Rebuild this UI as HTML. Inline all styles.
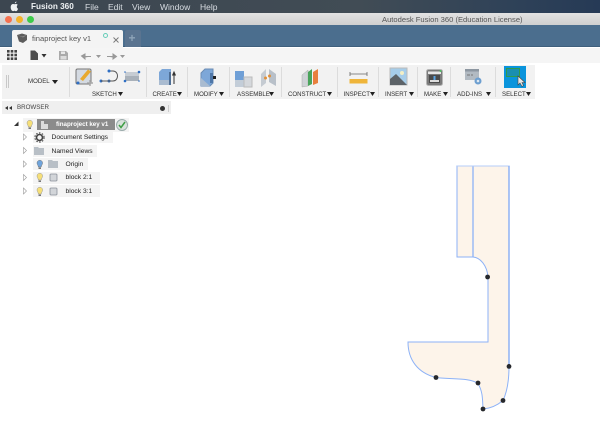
<!DOCTYPE html>
<html><head><meta charset="utf-8">
<style>
html,body{margin:0;padding:0;background:#fff}
#p{position:relative;width:600px;height:433px;overflow:hidden;background:#fff;font-family:"Liberation Sans",sans-serif;filter:blur(.3px)}
#p div{position:absolute}
.t{white-space:nowrap;line-height:10px}
.m{font-size:8.5px;color:#d8dde2;top:2px;line-height:10px;white-space:nowrap}
.l{font-size:6.1px;color:#2e2e2e;top:90px;line-height:9px;white-space:nowrap}
.sep{top:67px;width:1px;height:30px;background:#dcdcdc}
.row{height:12px;background:#f4f4f4}
.n{font-size:6.7px;color:#222;line-height:10px;white-space:nowrap}
svg{position:absolute;overflow:visible}
</style></head><body><div id="p">
<div style="left:0;top:0;width:600px;height:13px;background:linear-gradient(90deg,#3c4650 0%,#414c55 60%,#2f4258 85%,#263a56 100%)"></div>
<svg style="left:0;top:0" width="30" height="13"><path d="M16.6 1.6c-.2 1-1 1.700-1.800 1.700 0-1 .8-1.700 1.800-1.700zM12.500 11c-1.500-.6-2.500-4-1.200-6 .9-1.200 2.200-1.200 3.300-.7 1-.5 2.300-.5 3.200.6-1.500 1-1.200 3.200.3 3.900-.5 1.300-1.200 2.400-2.100 2.400-.6 0-1-.4-1.500-.4-.6 0-1.200.7-2 .2z" fill="#eef1f3"/></svg>
<div class="m" style="left:31px;font-weight:bold;color:#eef1f3;font-size:8.2px">Fusion 360</div>
<div class="m" style="left:85px">File</div>
<div class="m" style="left:108px">Edit</div>
<div class="m" style="left:132px">View</div>
<div class="m" style="left:160px">Window</div>
<div class="m" style="left:200px">Help</div>

<div style="left:0;top:13px;width:600px;height:12px;background:linear-gradient(#e2e2e2,#cfcfcf)"></div>
<div style="left:5px;top:16px;width:7px;height:7px;border-radius:50%;background:#f5714f"></div>
<div style="left:16px;top:16px;width:7px;height:7px;border-radius:50%;background:#f4b32a"></div>
<div style="left:27px;top:16px;width:7px;height:7px;border-radius:50%;background:#3ccb4a"></div>
<div class="t" style="left:382px;top:15px;font-size:7.6px;color:#555">Autodesk Fusion 360 (Education License)</div>

<div style="left:0;top:25px;width:600px;height:22px;background:#4b6e8e;border-bottom:1px solid #3f5f7c;box-sizing:border-box"></div>
<div style="left:12px;top:30px;width:111px;height:18px;background:#f4f4f4;border-radius:2px 2px 0 0"></div>
<div style="left:125px;top:30px;width:16px;height:17px;background:#5a7490;border-radius:2px 2px 0 0"></div>
<div class="t" style="left:128.500px;top:33px;font-size:12px;color:#8ea4b8;font-weight:bold">+</div>
<svg style="left:17px;top:33px" width="14" height="12"><path d="M0 2L5 0.500L10 2V7L6 10L2 8.500Z" fill="#5c5c5c"/><path d="M0 2L5 3.500L10 2L6 4.500Z" fill="#8a8a8a"/></svg>
<div class="t" style="left:32px;top:34px;font-size:7.6px;color:#555">finaproject key v1</div>
<div style="left:103px;top:33px;width:3px;height:3px;border:1px solid #66cdb8;border-radius:50%"></div>
<svg style="left:113px;top:37px" width="6" height="6"><path d="M.5 .5L5.500 5.500M5.500 .5L.5 5.500" stroke="#777" stroke-width=".9"/></svg>

<div style="left:0;top:48px;width:600px;height:15px;background:#f5f5f5"></div>
<svg style="left:6px;top:49px" width="12" height="12"><g fill="#444"><rect x="1" y="1" width="2.600" height="2.600"/><rect x="4.700" y="1" width="2.600" height="2.600"/><rect x="8.400" y="1" width="2.600" height="2.600"/><rect x="1" y="4.700" width="2.600" height="2.600"/><rect x="4.700" y="4.700" width="2.600" height="2.600"/><rect x="8.400" y="4.700" width="2.600" height="2.600"/><rect x="1" y="8.400" width="2.600" height="2.600"/><rect x="4.700" y="8.400" width="2.600" height="2.600"/><rect x="8.400" y="8.400" width="2.600" height="2.600"/></g></svg>
<svg style="left:30px;top:50px" width="18" height="11"><path d="M.5 .5H5L8 3.500V10H.5Z" fill="#4d4d4d"/><path d="M11.500 4H16.500L14 7.500Z" fill="#333"/></svg>
<svg style="left:58px;top:50px" width="11" height="11"><path d="M1 1H8L10 3V10H1Z" fill="#aaa"/><rect x="3" y="1.500" width="4" height="2.500" fill="#e8e8e8"/><rect x="2.500" y="6" width="6" height="3.500" fill="#dcdcdc"/></svg>
<svg style="left:81px;top:50px" width="45" height="11"><path d="M10 6.500H4V4L.5 6L4 9V7.500M4 6.500H9.500" fill="#999" stroke="#999"/><path d="M15 5H20L17.500 8Z" fill="#999"/><path d="M26 6.500H32V4L35.500 6.500L32 9V7.500" fill="#999" stroke="#999"/><path d="M39 5H44L41.500 8Z" fill="#999"/></svg>

<div style="left:2px;top:65px;width:533px;height:34px;background:#f2f2f2"></div>
<div style="left:6px;top:75px;width:1px;height:13px;background:#c8c8c8"></div>
<div style="left:8px;top:75px;width:1px;height:13px;background:#c8c8c8"></div>
<div class="t" style="left:28px;top:77px;font-size:6.100px;color:#333">MODEL</div>
<svg style="left:52px;top:80px" width="6" height="5"><path d="M0 0H6L3 4Z" fill="#222"/></svg>
<div class="sep" style="left:69px"></div><div class="sep" style="left:146px"></div><div class="sep" style="left:187px"></div><div class="sep" style="left:229px"></div><div class="sep" style="left:281px"></div><div class="sep" style="left:337px"></div><div class="sep" style="left:378px"></div><div class="sep" style="left:417px"></div><div class="sep" style="left:450px"></div><div class="sep" style="left:495px"></div>

<svg style="left:75px;top:68px" width="70" height="20">
<rect x="1" y="1" width="15" height="15" rx="1.500" fill="#d4dae2" stroke="#777"/>
<path d="M5 11L13 1.500L16 3.500L8 13Z" fill="#e8a92e"/>
<circle cx="3" cy="15" r="1.500" fill="#2f6fc4"/><path d="M15 12V18M12 15H18" stroke="#aaa" stroke-width="1.500"/>
<circle cx="26" cy="13" r="1.500" fill="#2f6fc4"/><circle cx="34" cy="13" r="1.500" fill="#2f6fc4"/><path d="M26 13H34" stroke="#555"/>
<path d="M34 3H38C44 3 44 13 38 13H34" fill="none" stroke="#555"/><circle cx="34" cy="3" r="1.500" fill="#2f6fc4"/>
<path d="M50 4H64V13H50Z" fill="#c6ccd3"/><path d="M50 8H64V13H50Z" fill="#a9b1ba"/>
<circle cx="50" cy="13" r="1.300" fill="#2f6fc4"/><circle cx="64" cy="4" r="1.300" fill="#2f6fc4"/><circle cx="50" cy="4" r="0.800" fill="#2f6fc4"/><circle cx="64" cy="13" r="0.800" fill="#2f6fc4"/>
</svg>
<svg style="left:158px;top:68px" width="20" height="20"><path d="M1 4L4 1H13V15L11 17H1Z" fill="#7da7d8"/><path d="M1 12H11V17H1Z" fill="#a9bbd0"/><path d="M11 4H13V17H11Z" fill="#4f6f96"/><path d="M16 6V16M14.500 7.500L16 4L17.500 7.500" stroke="#333" fill="#333"/></svg>
<svg style="left:199px;top:68px" width="20" height="20"><path d="M2 5L6 1H14V15L11 18H2Z" fill="#7da7d8" stroke="#6a8cb5"/><path d="M2 10V18H11" fill="#a9bbd0"/><path d="M12 8H17V11H12Z" fill="#222"/><path d="M11 5H14V15H11Z" fill="#4f77a8"/></svg>
<svg style="left:234px;top:68px" width="44" height="20"><path d="M1 3H10V12H1Z" fill="#6f9fd6"/><path d="M1 12H10V19H1Z" fill="#c3cdd8"/><path d="M10 9H18V19H10Z" fill="#d5d8dc" stroke="#bbb"/><path d="M27 6L32 1V15L27 19Z" fill="#c5cbd2"/><path d="M35 1L42 6V18L35 14Z" fill="#b8c0c9"/><circle cx="31.500" cy="10" r="1.500" fill="#e0903a"/><circle cx="35.500" cy="8" r="1.500" fill="#e0903a"/></svg>
<svg style="left:300px;top:68px" width="20" height="20"><path d="M2 7L8 2V18L2 19Z" fill="#cfd3d7" stroke="#aaa" stroke-width=".5"/><path d="M8 4L12 1V16L8 18Z" fill="#4aa45c"/><path d="M13 4L18 1V15L13 17Z" fill="#e8803e"/></svg>
<svg style="left:349px;top:70px" width="20" height="16"><path d="M1 2V6M18 2V6M1 4H18" stroke="#666" stroke-width=".8"/><rect x="0.500" y="9" width="18" height="4.500" fill="#efb53a"/></svg>
<svg style="left:390px;top:68px" width="18" height="18"><rect x="0" y="0" width="17" height="17" fill="#a6cdea" stroke="#bbb"/><circle cx="12" cy="5" r="2" fill="#f3efc6"/><path d="M0 17V11L6 6L13 13L17 17Z" fill="#5d6368"/></svg>
<svg style="left:426px;top:69px" width="17" height="17"><rect x=".5" y=".5" width="16" height="16" rx="2" fill="#7a7a7a" stroke="#b5b5b5"/><rect x="2" y="2.500" width="13" height="2.500" fill="#e6e6e6"/><rect x="3" y="6" width="11" height="8" fill="#4a4a4a"/><path d="M4 11H13V13H4Z" fill="#dcdcdc"/><path d="M8.500 7V11" stroke="#5aa5e6" stroke-width="2"/><circle cx="14.500" cy="2" r="1" fill="#4ac060"/></svg>
<svg style="left:465px;top:69px" width="18" height="17"><rect x="0" y="0" width="14" height="11" fill="#b2bac2"/><rect x="0" y="0" width="14" height="2.500" fill="#8d97a1"/><path d="M2 6H5M6 6H8" stroke="#777"/><circle cx="13" cy="12" r="3.500" fill="#6d9fd0"/><circle cx="13" cy="12" r="1.300" fill="#dfe8f0"/></svg>
<div style="left:504px;top:66px;width:22px;height:22px;background:#0a94dc"></div>
<div style="left:506px;top:68px;width:12px;height:7px;border:1px solid #2f9a4e;background:#1a8fb0"></div>
<svg style="left:517px;top:75px" width="9" height="12"><path d="M1 1V10L3 8L5 11.500L6.500 10.500L5 7.500H8Z" fill="#e6e6e6" stroke="#444" stroke-width=".6"/></svg>

<div class="l" style="left:92px">SKETCH</div><svg style="left:118px;top:92px" width="5" height="4"><path d="M0 0H5L2.500 4Z" fill="#222"/></svg>
<div class="l" style="left:152.500px">CREATE</div><svg style="left:177px;top:92px" width="5" height="4"><path d="M0 0H5L2.500 4Z" fill="#222"/></svg>
<div class="l" style="left:194px">MODIFY</div><svg style="left:219px;top:92px" width="5" height="4"><path d="M0 0H5L2.500 4Z" fill="#222"/></svg>
<div class="l" style="left:237px">ASSEMBLE</div><svg style="left:269px;top:92px" width="5" height="4"><path d="M0 0H5L2.500 4Z" fill="#222"/></svg>
<div class="l" style="left:288px">CONSTRUCT</div><svg style="left:327px;top:92px" width="5" height="4"><path d="M0 0H5L2.500 4Z" fill="#222"/></svg>
<div class="l" style="left:343.500px">INSPECT</div><svg style="left:370px;top:92px" width="5" height="4"><path d="M0 0H5L2.500 4Z" fill="#222"/></svg>
<div class="l" style="left:385px">INSERT</div><svg style="left:409px;top:92px" width="5" height="4"><path d="M0 0H5L2.500 4Z" fill="#222"/></svg>
<div class="l" style="left:424px">MAKE</div><svg style="left:443px;top:92px" width="5" height="4"><path d="M0 0H5L2.500 4Z" fill="#222"/></svg>
<div class="l" style="left:457px">ADD-INS</div><svg style="left:486px;top:92px" width="5" height="4"><path d="M0 0H5L2.500 4Z" fill="#222"/></svg>
<div class="l" style="left:502px">SELECT</div><svg style="left:526px;top:92px" width="5" height="4"><path d="M0 0H5L2.500 4Z" fill="#222"/></svg>

<div style="left:2px;top:101px;width:169px;height:13px;background:#efefef"></div>
<svg style="left:5px;top:106px" width="7" height="4"><path d="M3 0V4L0 2ZM7 0V4L4 2Z" fill="#333"/></svg>
<div class="t" style="left:17px;top:103px;font-size:6.200px;color:#444">BROWSER</div>
<div style="left:160px;top:106px;width:5px;height:5px;border-radius:50%;background:#333"></div>
<div style="left:168px;top:105px;width:1px;height:7px;background:#ccc"></div>

<svg style="left:14px;top:121px" width="5" height="6"><path d="M4.500 .5V5H0Z" fill="#333"/></svg>
<div class="row" style="left:23px;top:118px;width:106px;height:14px"></div>
<div style="left:37px;top:119px;width:78px;height:11px;background:#8b8b8b"></div>
<div class="n" style="left:56px;top:120px;color:#fff;font-weight:bold;font-size:6.200px">finaproject key v1</div>
<svg style="left:40px;top:120px" width="10" height="10"><path d="M1 1H4V4H8V9H1Z" fill="#dcdcdc"/></svg>
<div style="left:116px;top:119px;width:10px;height:10px;border-radius:50%;background:#d9e2dc;border:1px solid #9aa"></div>
<svg style="left:117px;top:120px" width="10" height="10"><path d="M2 5L4 7.500L8 2" fill="none" stroke="#3f9e46" stroke-width="1.500"/></svg>

<div class="row" style="left:33px;top:131px;width:80px;height:12px"></div>
<div class="row" style="left:33px;top:145px;width:64px;height:12px"></div>
<div class="row" style="left:33px;top:158px;width:55px;height:12px"></div>
<div class="row" style="left:33px;top:172px;width:67px;height:12px"></div>
<div class="row" style="left:33px;top:185px;width:67px;height:12px"></div>

<svg style="left:23px;top:120px" width="12" height="80"><g fill="#fff" stroke="#999" stroke-width=".6"><path d="M0.500 14V20L3.500 17Z"/><path d="M0.500 27.500V33.500L3.500 30.500Z"/><path d="M0.500 41V47L3.500 44Z"/><path d="M0.500 54.500V60.500L3.500 57.500Z"/><path d="M0.500 68V74L3.500 71Z"/></g></svg>
<svg style="left:25px;top:119px" width="10" height="80"><g><path d="M2 4a2.800 2.800 0 1 1 5.600 0c0 1.500-1.200 2-1.300 4H3.300c-.1-2-1.300-2.500-1.300-4z" fill="#f6df78" stroke="#999" stroke-width=".5"/><rect x="3.500" y="8.500" width="2.500" height="1.500" fill="#777"/></g>
<g transform="translate(10,40)"><path d="M2 4a2.800 2.800 0 1 1 5.600 0c0 1.500-1.200 2-1.300 4H3.300c-.1-2-1.300-2.500-1.300-4z" fill="#6fa4dc" stroke="#777" stroke-width=".5"/><rect x="3.500" y="8.500" width="2.500" height="1.500" fill="#777"/></g>
<g transform="translate(10,53)"><path d="M2 4a2.800 2.800 0 1 1 5.600 0c0 1.500-1.200 2-1.300 4H3.300c-.1-2-1.300-2.500-1.300-4z" fill="#f6df78" stroke="#999" stroke-width=".5"/><rect x="3.500" y="8.500" width="2.500" height="1.500" fill="#777"/></g>
<g transform="translate(10,67)"><path d="M2 4a2.800 2.800 0 1 1 5.600 0c0 1.500-1.200 2-1.300 4H3.300c-.1-2-1.300-2.500-1.300-4z" fill="#f6df78" stroke="#999" stroke-width=".5"/><rect x="3.500" y="8.500" width="2.500" height="1.500" fill="#777"/></g></svg>

<svg style="left:34px;top:132px" width="11" height="11"><circle cx="5.500" cy="5.500" r="3" fill="none" stroke="#444" stroke-width="1.600"/><circle cx="5.500" cy="5.500" r="4.600" fill="none" stroke="#444" stroke-width="1.100" stroke-dasharray="1.500 1.500"/></svg>
<svg style="left:34px;top:146px" width="11" height="10"><path d="M0 1H4L5 2H10V9H0Z" fill="#b8bfc6"/></svg>
<svg style="left:48px;top:159px" width="11" height="10"><path d="M0 1H4L5 2H10V9H0Z" fill="#b8bfc6"/></svg>
<svg style="left:49px;top:173px" width="9" height="9"><rect x="1" y="1" width="7" height="7" rx="1" fill="#d2d5d9" stroke="#8a9099" stroke-width=".8"/></svg>
<svg style="left:49px;top:187px" width="9" height="9"><rect x="1" y="1" width="7" height="7" rx="1" fill="#d2d5d9" stroke="#8a9099" stroke-width=".8"/></svg>
<div class="n" style="left:51.500px;top:133px">Document Settings</div>
<div class="n" style="left:51.500px;top:147px">Named Views</div>
<div class="n" style="left:65.500px;top:160px">Origin</div>
<div class="n" style="left:65.500px;top:173px">block 2:1</div>
<div class="n" style="left:65.500px;top:187px">block 3:1</div>

<svg style="left:0;top:0" width="600" height="433">
<path d="M457 166H509V366.500C509 381 507 392 503 400.500C497 405.500 490 408.500 483 409C482.500 400 483 392 478 383.500C470 377.500 452 379.500 436 377.500C418 373 408 360 408 342H488V277C487 265 480 257.500 473 257H457Z" fill="#fdf4ea" stroke="#8db2f7" stroke-width="1"/>
<path d="M473 166V257" stroke="#8db2f7" stroke-width="1.300" fill="none"/>
<path d="M457 166H509" stroke="#b5cdf8" stroke-width="1" fill="none"/>
<path d="M509 166V366" stroke="#7fa8f5" stroke-width="1.300" fill="none"/>
<g fill="#26282c"><circle cx="487.600" cy="277" r="2.400"/><circle cx="509" cy="366.400" r="2.400"/><circle cx="503" cy="400.500" r="2.400"/><circle cx="483" cy="409" r="2.400"/><circle cx="478" cy="383" r="2.400"/><circle cx="436" cy="377.500" r="2.400"/></g>
</svg>
</div></body></html>
